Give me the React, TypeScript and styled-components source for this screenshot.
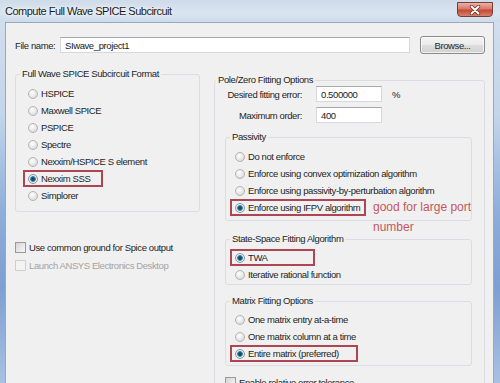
import React from 'react'
import styled, { createGlobalStyle } from 'styled-components'

const GlobalStyle = createGlobalStyle`
  html, body {
    margin: 0;
    padding: 0;
    background: #f0f0f0;
  }
  body {
    font-family: "Liberation Sans", Arial, sans-serif;
  }
`

const Window = styled.div`
  width: 500px;
  height: 383px;
  overflow: hidden;
  display: flex;
  flex-direction: column;
  background: linear-gradient(180deg, #d3e0ee 0%, #c3d5ea 30%, #8eaedb 55%, #7d9fd2 75%, #a9c1e2 100%);
`

const TitleBar = styled.div`
  height: 22px;
  flex: none;
  display: flex;
  align-items: flex-start;
  justify-content: space-between;
  background: linear-gradient(180deg, #cfdbe9 0%, #d9e4f0 60%, #cddbeb 100%);
`

const TitleText = styled.div`
  margin: 4px 0 0 5px;
  font-size: 11px;
  letter-spacing: -0.5px;
  line-height: 14px;
  color: #1a1a1a;
  text-shadow: 0 0 6px #ffffff, 0 0 3px #ffffff;
`

const CloseButton = styled.div`
  width: 36px;
  height: 15px;
  margin: 2px 7px 0 0;
  box-sizing: border-box;
  border: 1px solid #7a3b35;
  border-radius: 0 0 4px 4px;
  background: linear-gradient(180deg, #ebb2a6 0%, #d87a68 45%, #c44a33 55%, #d9806c 100%);
  display: flex;
  align-items: center;
  justify-content: center;
`

const Body = styled.div`
  flex: 1;
  margin: 0 6px 0 5px;
  border: 1px solid #97a9c0;
  border-bottom: none;
  background: #f0f0f0;
  padding: 13px 8px 0 9px;
  font-size: 9.5px;
  letter-spacing: -0.4px;
  color: #1e1e1e;
`

const FileRow = styled.div`
  display: flex;
  align-items: center;
  height: 18px;
`

const FileLabel = styled.span`
  width: 45px;
  flex: none;
`

const TextBox = styled.div<{ $width: number }>`
  width: ${(p) => p.$width}px;
  height: 16px;
  box-sizing: border-box;
  flex: none;
  border: 1px solid #d6d8de;
  border-top-color: #a6a8ad;
  background: #ffffff;
  padding: 0 0 0 4px;
  display: flex;
  align-items: center;
  color: #1a1a1a;
`

const Button = styled.div`
  width: 65px;
  height: 18px;
  margin-left: 10px;
  box-sizing: border-box;
  border: 1px solid #8a8a8a;
  border-radius: 3px;
  background: linear-gradient(180deg, #f4f4f4 0%, #ebebeb 48%, #dddddd 52%, #d2d2d2 100%);
  box-shadow: inset 0 0 0 1px rgba(255, 255, 255, 0.7);
  display: flex;
  align-items: center;
  justify-content: center;
  color: #2a2a2a;
`

const Columns = styled.div`
  margin-top: 14px;
  display: grid;
  grid-template-columns: 185px 1fr;
  column-gap: 14px;
  align-items: start;
`

const Column = styled.div<{ $offset?: number }>`
  display: flex;
  flex-direction: column;
  margin-top: ${(p) => p.$offset || 0}px;
`

const GroupBox = styled.fieldset<{ $gap?: number }>`
  margin: ${(p) => p.$gap || 0}px 0 0 0;
  padding: 0;
  min-width: 0;
  border: 1px solid #dadde1;
  border-radius: 3px;
`

const Legend = styled.legend<{ $indent?: number }>`
  margin-left: ${(p) => (p.$indent === undefined ? 4 : p.$indent)}px;
  padding: 0 2px;
  line-height: 12px;
  color: #1e1e1e;
`

const OptionList = styled.div<{ $pad: string }>`
  display: flex;
  flex-direction: column;
  align-items: flex-start;
  padding: ${(p) => p.$pad};
`

const Option = styled.div<{ $mark?: number }>`
  position: relative;
  display: flex;
  align-items: center;
  gap: 3px;
  height: 17px;
  box-sizing: border-box;
  padding-left: 5px;
  width: ${(p) => (p.$mark ? `${p.$mark}px` : 'auto')};
  box-shadow: ${(p) => (p.$mark ? 'inset 0 0 0 2px #ad4553' : 'none')};
  white-space: nowrap;
`

const RadioMark = styled.span<{ $checked?: boolean }>`
  width: 10px;
  height: 10px;
  flex: none;
  box-sizing: border-box;
  border-radius: 50%;
  border: 1px solid ${(p) => (p.$checked ? '#8a9aa6' : '#b4b4b4')};
  background: ${(p) =>
    p.$checked
      ? 'radial-gradient(circle at 50% 50%, #0e3550 0, #1d5a80 1.6px, #4b8db2 2.6px, #e9eef2 3.2px, #d0d3d6 100%)'
      : 'radial-gradient(circle at 40% 35%, #ffffff 0, #e6e6e6 55%, #cfcfcf 100%)'};
`

const CheckRow = styled.div<{ $disabled?: boolean }>`
  display: flex;
  align-items: center;
  gap: 3px;
  height: 18px;
  color: ${(p) => (p.$disabled ? '#a3a3a3' : '#1e1e1e')};
  white-space: nowrap;
`

const CheckMark = styled.span<{ $disabled?: boolean }>`
  width: 11px;
  height: 11px;
  flex: none;
  box-sizing: border-box;
  border: 1px solid ${(p) => (p.$disabled ? '#cfcfcf' : '#9a9a9a')};
  background: ${(p) =>
    p.$disabled
      ? '#f3f3f3'
      : 'linear-gradient(135deg, #d3d3d3 0%, #e9e9e9 55%, #f7f7f7 100%)'};
`

const LeftChecks = styled.div`
  margin-top: 26px;
  display: flex;
  flex-direction: column;
`

const FieldRow = styled.div`
  display: flex;
  align-items: center;
  height: 16px;
  margin-bottom: 5px;
`

const FieldLabel = styled.span`
  width: 77px;
  margin-right: 14px;
  text-align: right;
  flex: none;
  white-space: nowrap;
`

const Unit = styled.span`
  margin-left: 10px;
`

const Note = styled.div`
  position: absolute;
  left: calc(100% + 7px);
  top: -2px;
  font-size: 12px;
  line-height: 20px;
  letter-spacing: 0;
  color: #c4575e;
  white-space: nowrap;
`

function Radio({ label, checked, mark, children }: { label: string; checked?: boolean; mark?: number; children?: React.ReactNode }) {
  return (
    <Option $mark={mark}>
      <RadioMark $checked={checked} />
      {label}
      {children}
    </Option>
  )
}

function Check({ label, disabled }: { label: string; disabled?: boolean }) {
  return (
    <CheckRow $disabled={disabled}>
      <CheckMark $disabled={disabled} />
      {label}
    </CheckRow>
  )
}

const formats = ['HSPICE', 'Maxwell SPICE', 'PSPICE', 'Spectre', 'Nexxim/HSPICE S element', 'Nexxim SSS', 'Simplorer']

export default function App() {
  return (
    <>
      <GlobalStyle />
      <Window>
        <TitleBar>
          <TitleText>Compute Full Wave SPICE Subcircuit</TitleText>
          <CloseButton>
            <svg width="12" height="10" viewBox="0 0 12 10">
              <path d="M2.5 1.5 L9.5 8.5 M9.5 1.5 L2.5 8.5" stroke="#6b2a22" strokeWidth="3.4" strokeLinecap="round" />
              <path d="M2.5 1.5 L9.5 8.5 M9.5 1.5 L2.5 8.5" stroke="#ffffff" strokeWidth="2" strokeLinecap="round" />
            </svg>
          </CloseButton>
        </TitleBar>
        <Body>
          <FileRow>
            <FileLabel>File name:</FileLabel>
            <TextBox $width={350}>SIwave_project1</TextBox>
            <Button>Browse...</Button>
          </FileRow>

          <Columns>
            <Column>
              <GroupBox>
                <Legend>Full Wave SPICE Subcircuit Format</Legend>
                <OptionList $pad="5px 0 7px 7px">
                  {formats.map((f) =>
                    f === 'Nexxim SSS' ? (
                      <Radio key={f} label={f} checked mark={80} />
                    ) : (
                      <Radio key={f} label={f} />
                    )
                  )}
                </OptionList>
              </GroupBox>
              <LeftChecks>
                <Check label="Use common ground for Spice output" />
                <Check label="Launch ANSYS Electronics Desktop" disabled />
              </LeftChecks>
            </Column>

            <Column $offset={6}>
              <GroupBox>
                <Legend $indent={1}>Pole/Zero Fitting Options</Legend>
                <OptionList $pad="0 12px 0 10px" style={{ alignItems: 'stretch' }}>
                  <FieldRow>
                    <FieldLabel>Desired fitting error:</FieldLabel>
                    <TextBox $width={66}>0.500000</TextBox>
                    <Unit>%</Unit>
                  </FieldRow>
                  <FieldRow>
                    <FieldLabel>Maximum order:</FieldLabel>
                    <TextBox $width={66}>400</TextBox>
                  </FieldRow>

                  <GroupBox $gap={3}>
                    <Legend>Passivity</Legend>
                    <OptionList $pad="5px 0 4px 4px">
                      <Radio label="Do not enforce" />
                      <Radio label="Enforce using convex optimization algorithm" />
                      <Radio label="Enforce using passivity-by-perturbation algorithm" />
                      <Radio label="Enforce using IFPV algorithm" checked mark={136}>
                        <Note>
                          good for large port
                          <br />
                          number
                        </Note>
                      </Radio>
                    </OptionList>
                  </GroupBox>

                  <GroupBox $gap={12}>
                    <Legend>State-Space Fitting Algorithm</Legend>
                    <OptionList $pad="4px 0 1px 4px">
                      <Radio label="TWA" checked mark={85} />
                      <Radio label="Iterative rational function" />
                    </OptionList>
                  </GroupBox>

                  <GroupBox $gap={10}>
                    <Legend>Matrix Fitting Options</Legend>
                    <OptionList $pad="4px 0 3px 4px">
                      <Radio label="One matrix entry at-a-time" />
                      <Radio label="One matrix column at a time" />
                      <Radio label="Entire matrix (preferred)" checked mark={128} />
                    </OptionList>
                  </GroupBox>

                  <LeftChecks style={{ marginTop: 7 }}>
                    <Check label="Enable relative error tolerance" />
                  </LeftChecks>
                </OptionList>
              </GroupBox>
            </Column>
          </Columns>
        </Body>
      </Window>
    </>
  )
}
